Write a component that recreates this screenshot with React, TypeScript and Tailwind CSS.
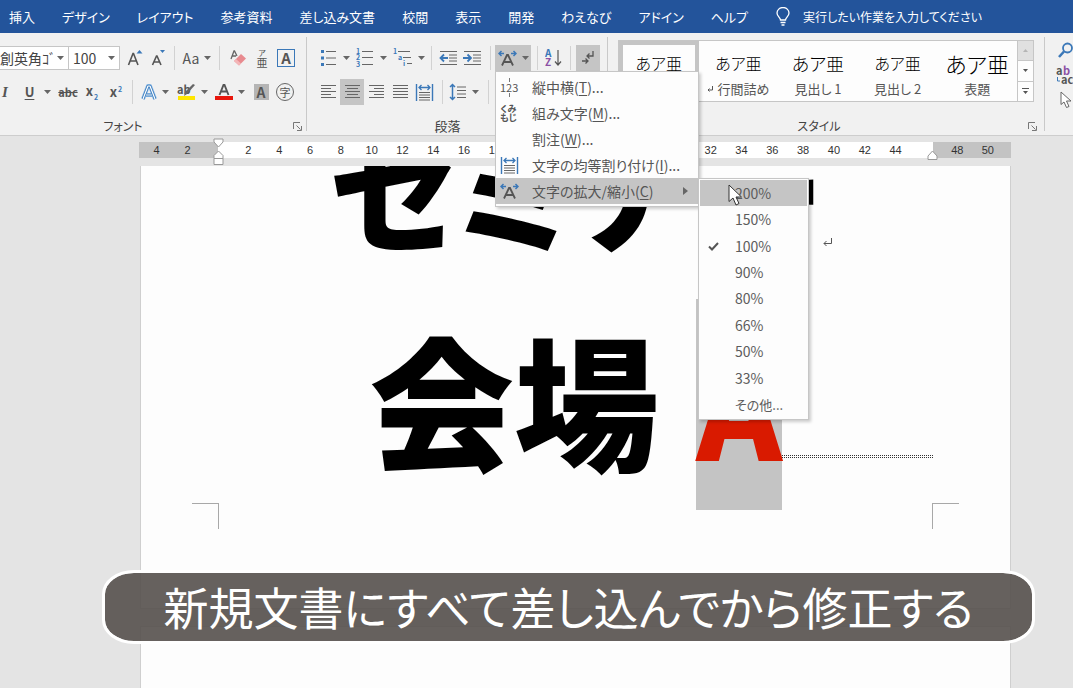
import React from "react";
import clsx from "clsx";

const tabs = [
  "挿入",
  "デザイン",
  "レイアウト",
  "参考資料",
  "差し込み文書",
  "校閲",
  "表示",
  "開発",
  "わえなび",
  "アドイン",
  "ヘルプ",
];

const scales = ["200%", "150%", "100%", "90%", "80%", "66%", "50%", "33%", "その他..."];

const styles = [
  { name: "標準", size: "text-[16px]" },
  { name: "行間詰め", size: "text-[16px]", mark: true },
  { name: "見出し 1", size: "text-[18px]" },
  { name: "見出し 2", size: "text-[16px]" },
  { name: "表題", size: "text-[22px]" },
];

const rulerMiddle = Array.from({ length: 22 }, (_, i) => (i + 1) * 2);

function Caret() {
  return (
    <svg width="7" height="4" viewBox="0 0 7 4" className="shrink-0" fill="#666">
      <path d="M0 0h7L3.5 4z" />
    </svg>
  );
}

function Divider() {
  return <span className="h-6 w-px shrink-0 bg-[#d2d2d2]" />;
}

interface ToolProps {
  label: string;
  className?: string;
  active?: boolean;
  caret?: boolean;
  children: React.ReactNode;
}

function Tool({ label, className, active, caret, children }: ToolProps) {
  return (
    <button
      type="button"
      aria-label={label}
      className={clsx(
        "flex h-[26px] shrink-0 items-center justify-center",
        caret && "gap-[5px]",
        active && "bg-[#c5c5c5]",
        className ?? "w-6"
      )}
    >
      {children}
      {caret && <Caret />}
    </button>
  );
}

function Launcher({ label }: { label: string }) {
  return (
    <button type="button" aria-label={label} className="flex h-4 w-4 items-center justify-center">
      <svg width="9" height="9" viewBox="0 0 9 9" fill="none" stroke="#777">
        <path d="M0.5 7V0.5H7M3.5 3.5l4 4M8.5 4v4.5H4" />
      </svg>
    </button>
  );
}

function Lines({ rows }: { rows: [number, number][] }) {
  return (
    <svg width="17" height="16" viewBox="0 0 17 16" stroke="#666" fill="none">
      {rows.map(([from, to], i) => (
        <path key={i} d={`M${from} ${i * 3 + 1.5}H${to}`} />
      ))}
    </svg>
  );
}

function DistributeIcon() {
  return (
    <svg width="19" height="19" viewBox="0 0 19 19" fill="none">
      <path d="M1.5 1v17M17.5 1v17" stroke="#3b78b8" strokeWidth="1.4" />
      <path d="M4 4.5h11M6.5 2L4 4.500l2.500 2.500M12.500 2L15 4.500 12.500 7" stroke="#3b78b8" strokeWidth="1.300" />
      <path d="M4 9.500h11M4 12h11M4 14.500h11M4 17h11" stroke="#666" />
    </svg>
  );
}

function ScaleIcon() {
  return (
    <svg width="19" height="18" viewBox="0 0 19 18" fill="none">
      <path d="M4 16.500L9 6h1l5 10.500M6 13h7" stroke="#555" strokeWidth="1.800" />
      <path d="M1 4.500h5M3.500 2L1 4.500 3.500 7M18 4.500h-5M15.500 2L18 4.500 15.500 7" stroke="#3b78b8" strokeWidth="1.500" />
    </svg>
  );
}

function ReturnMark() {
  return (
    <svg width="9" height="9" viewBox="0 0 9 9" fill="none" stroke="#555">
      <path d="M8.500 0v5.500H1M3.500 3L1 5.500 3.500 8" />
    </svg>
  );
}

function FontGroup() {
  return (
    <section className="flex w-[307px] shrink-0 flex-col border-r border-[#c9c9c9]">
      <div className="flex h-6 items-center">
        <div className="flex h-full w-[69px] items-center border-y border-r border-[#c6c6c6] bg-white pr-1">
          <input
            aria-label="フォント名"
            defaultValue="創英角ｺﾞ"
            className="w-full min-w-0 text-[14px] text-[#444] outline-none"
          />
          <Caret />
        </div>
        <div className="flex h-full w-[51px] items-center border-y border-r border-[#c6c6c6] bg-white pr-1 pl-1">
          <input
            aria-label="フォント サイズ"
            defaultValue="100"
            className="w-full min-w-0 text-[14px] text-[#444] outline-none"
          />
          <Caret />
        </div>
        <Tool label="フォントの拡大" className="ml-[3px] w-6">
          <svg width="16" height="18" viewBox="0 0 16 18" fill="none">
            <path d="M1.500 16L6 4.500h.500L11 16M3 12h6.500" stroke="#555" strokeWidth="1.600" />
            <path d="M9.500 4.500l3-3.500 3 3.500z" fill="#3b78b8" />
          </svg>
        </Tool>
        <Tool label="フォントの縮小">
          <svg width="16" height="18" viewBox="0 0 16 18" fill="none">
            <path d="M1.500 16L5.500 7H6l4 9M3 13h5.500" stroke="#555" strokeWidth="1.600" />
            <path d="M9 1l2.500 3L14 1z" fill="#3b78b8" />
          </svg>
        </Tool>
        <span className="w-[3px]" />
        <Divider />
        <Tool label="文字種の変換" className="w-11 text-[14px] text-[#555]" caret>
          Aa
        </Tool>
        <Divider />
        <Tool label="書式のクリア" className="ml-1 w-7">
          <svg width="17" height="18" viewBox="0 0 17 18" fill="none">
            <path d="M1 10L4 2h.500L7 7M2 7h4" stroke="#666" strokeWidth="1.300" />
            <path d="M4 12l7-7 5 4.500-7 7z" fill="#e88a8f" />
            <path d="M4 12l2-2 5 4.500-2 2z" fill="#f3b6b8" />
          </svg>
        </Tool>
        <Tool label="ルビ" className="w-5 flex-col text-[#555]">
          <span className="text-[8px] leading-[8px]">ア</span>
          <span className="text-[11px] leading-[11px]">亜</span>
        </Tool>
        <Tool label="囲み線" className="ml-[2px] w-6">
          <span className="flex h-[18px] w-[18px] items-center justify-center border border-[#3b78b8] text-[15px] font-bold text-[#555]">
            A
          </span>
        </Tool>
      </div>

      <div className="mt-[10px] flex h-6 items-center text-[#555]">
        <Tool label="斜体" className="w-[10px]">
          <span className="font-['Liberation_Serif',serif] text-[15px] font-bold italic">I</span>
        </Tool>
        <Tool label="下線" className="ml-[10px] w-9 gap-[10px]">
          <span className="text-[13px] font-bold underline underline-offset-2">U</span>
          <Caret />
        </Tool>
        <Tool label="取り消し線">
          <span className="text-[11px] font-bold line-through">abc</span>
        </Tool>
        <Tool label="下付き">
          <span className="text-[13px] font-bold">
            x<span className="ml-px align-sub text-[7px] text-[#3b78b8]">2</span>
          </span>
        </Tool>
        <Tool label="上付き">
          <span className="text-[13px] font-bold">
            x<span className="ml-px align-super text-[7px] text-[#3b78b8]">2</span>
          </span>
        </Tool>
        <span className="w-1" />
        <Divider />
        <Tool label="文字の効果" className="ml-1 w-9" caret>
          <svg width="16" height="17" viewBox="0 0 16 17" fill="none" strokeLinejoin="round">
            <path d="M2 15L7 2h2l5 13M5 11h6" stroke="#8fbbe6" strokeWidth="4" />
            <path d="M2 15L7 2h2l5 13M5 11h6" stroke="#2f74b8" strokeWidth="2.600" />
            <path d="M2 15L7 2h2l5 13M5 11h6" stroke="#fff" strokeWidth="1.200" />
          </svg>
        </Tool>
        <Tool label="蛍光ペンの色" className="w-[38px]" caret>
          <svg width="19" height="20" viewBox="0 0 19 20" fill="none">
            <text x="0" y="12" fontSize="11" fontWeight="700" fill="#555">ab</text>
            <path d="M18 3l-8 9-3 2 1-4 8-8z" fill="#666" />
            <path d="M1 14h17v4H1z" fill="#ffe600" />
          </svg>
        </Tool>
        <Tool label="フォントの色" className="w-[38px]" caret>
          <svg width="18" height="18" viewBox="0 0 18 18" fill="none">
            <path d="M4.500 12L8.500 2h1l4 10M6 8.500h6" stroke="#555" strokeWidth="1.900" />
            <path d="M0 13h18v4H0z" fill="#e8160c" />
          </svg>
        </Tool>
        <Tool label="文字の網かけ">
          <span className="flex h-4 w-[15px] items-center justify-center bg-[#b5b5b5] text-[14px] font-bold">A</span>
        </Tool>
        <Tool label="囲い文字">
          <span className="flex h-[18px] w-[18px] items-center justify-center rounded-full border border-[#666] text-[11px] leading-none">
            字
          </span>
        </Tool>
      </div>

      <div className="mt-[14px] flex h-4 items-center">
        <h2 className="flex-1 pl-[11px] text-center text-[12px] text-[#444]">
          <span className="mr-[54px]">フォント</span>
        </h2>
        <Launcher label="フォントの設定" />
        <span className="w-px" />
      </div>
    </section>
  );
}

const layoutMenu = [
  { text: "縦中横", key: "T", more: true },
  { text: "組み文字", key: "M", more: true },
  { text: "割注", key: "W", more: true },
  { text: "文字の均等割り付け", key: "I", more: true },
  { text: "文字の拡大/縮小", key: "C", more: false },
];

function MenuIcon({ id }: { id: string }) {
  if (id === "T") {
    return (
      <span className="flex flex-col items-center text-[11px] leading-[11px]">
        <span className="h-1 w-px bg-[#777]" />
        123
        <span className="h-1 w-px bg-[#777]" />
      </span>
    );
  }
  if (id === "M") {
    return (
      <span className="text-center text-[9px] leading-[9px] font-bold">
        くみ
        <br />
        もじ
      </span>
    );
  }
  if (id === "I") return <DistributeIcon />;
  if (id === "C") return <ScaleIcon />;
  return null;
}

function ScaleMenu() {
  return (
    <ul className="absolute top-0 left-full flex h-[242px] w-[111px] flex-col border border-[#c6c6c6] bg-[#fdfdfd] p-px shadow-[2px_2px_3px_rgba(0,0,0,0.2)]">
      {scales.map((scale, i) => (
        <li key={scale} className={clsx("relative flex flex-1", i === 0 && "bg-[#c5c5c5]")}>
          <button
            type="button"
            className={clsx(
              "flex w-full items-center text-[#5c5c5c]",
              scale.endsWith("%") ? "text-[14px]" : "text-[13px]"
            )}
          >
            <span className="flex w-[35px] pl-2">
              {scale === "100%" && (
                <svg width="11" height="9" viewBox="0 0 11 9" fill="none" stroke="#555" strokeWidth="2">
                  <path d="M1 4.500L4 7.500 10 1" />
                </svg>
              )}
            </span>
            {scale}
          </button>
          {i === 0 && (
            <svg width="15" height="22" viewBox="0 0 15 22" className="absolute top-1 left-7" fill="#fff" stroke="#333">
              <path d="M1 1v16.500l4-3.500 3 7 3-1.500-3-6.500h5.500z" />
            </svg>
          )}
        </li>
      ))}
    </ul>
  );
}

function LayoutMenu() {
  return (
    <ul className="absolute top-full left-0 z-10 w-[204px] border border-[#c6c6c6] bg-[#fdfdfd] py-[2px] shadow-[2px_2px_3px_rgba(0,0,0,0.2)]">
      {layoutMenu.map(({ text, key, more }) => (
        <li key={key} className={clsx("relative h-[26px]", !more && "bg-[#c5c5c5]")}>
          <button type="button" className="flex h-full w-full items-center pr-[10px] text-[14px] text-[#555]">
            <span className="flex w-9 items-center pl-1">
              <MenuIcon id={key} />
            </span>
            <span className="whitespace-nowrap">
              {text}(<u className="underline-offset-2">{key}</u>){more && "..."}
            </span>
            {!more && (
              <svg width="5" height="8" viewBox="0 0 5 8" className="ml-auto" fill="#666">
                <path d="M0 0l5 4-5 4z" />
              </svg>
            )}
          </button>
          {!more && <ScaleMenu />}
        </li>
      ))}
    </ul>
  );
}

function ParagraphGroup() {
  return (
    <section className="flex w-[301px] shrink-0 flex-col border-r border-[#c9c9c9] pl-[9px]">
      <div className="flex h-6 items-center">
        <Tool label="箇条書き" className="w-[37px]" caret>
          <svg width="18" height="18" viewBox="0 0 18 18">
            <path d="M1 1h3v3H1zM1 7.500h3v3H1zM1 14h3v3H1z" fill="#3b78b8" />
            <path d="M6 2.500h10M6 9h10M6 15.500h10" stroke="#666" />
          </svg>
        </Tool>
        <Tool label="段落番号" className="w-[37px]" caret>
          <svg width="19" height="24" viewBox="0 0 19 24" fill="#3b78b8" fontSize="7" fontWeight="700">
            <text x="0" y="8">1</text>
            <text x="0" y="14">2</text>
            <text x="0" y="21">3</text>
            <path d="M6 5.500h11M6 11.500h11M6 18.500h11" stroke="#666" />
          </svg>
        </Tool>
        <Tool label="アウトライン" className="w-[38px]" caret>
          <svg width="20" height="24" viewBox="0 0 20 24" fill="#3b78b8" fontSize="7" fontWeight="700">
            <text x="0" y="8">1</text>
            <text x="5" y="14">a</text>
            <text x="10" y="20">i</text>
            <path d="M5 5.500h12M10 11.500h8M14 17.500h5" stroke="#666" />
          </svg>
        </Tool>
        <span className="w-[3px]" />
        <Divider />
        <Tool label="インデントを減らす" className="ml-1 w-6">
          <svg width="19" height="16" viewBox="0 0 19 16" fill="none">
            <path d="M1 1.500h17M10 5h8M10 8h8M10 11h8M1 14.500h17" stroke="#666" />
            <path d="M9 8H2M5 4.500L1.500 8 5 11.500" stroke="#3b78b8" strokeWidth="1.800" />
          </svg>
        </Tool>
        <Tool label="インデントを増やす">
          <svg width="19" height="16" viewBox="0 0 19 16" fill="none">
            <path d="M1 1.500h17M10 5h8M10 8h8M10 11h8M1 14.500h17" stroke="#666" />
            <path d="M0 8h7M4.500 4.500L8 8l-3.500 3.500" stroke="#3b78b8" strokeWidth="1.800" />
          </svg>
        </Tool>
        <span className="w-[6px]" />
        <Divider />
        <div className="relative ml-1">
          <Tool label="拡張書式" className="w-9" active caret>
            <ScaleIcon />
          </Tool>
          <LayoutMenu />
        </div>
        <span className="w-[6px]" />
        <Divider />
        <Tool label="並べ替え" className="ml-1 w-6">
          <svg width="18" height="24" viewBox="0 0 18 24" fill="none">
            <text x="0" y="11" fontSize="10" fontWeight="700" fill="#3b78b8">A</text>
            <text x="0" y="20" fontSize="10" fontWeight="700" fill="#8b50a5">Z</text>
            <path d="M13 4v15M10 15.500l3 3.500 3-3.500" stroke="#555" strokeWidth="1.200" />
          </svg>
        </Tool>
        <span className="w-1" />
        <Divider />
        <Tool label="編集記号の表示" className="ml-[5px] w-6" active>
          <svg width="14" height="16" viewBox="0 0 14 16" fill="none" stroke="#555" strokeWidth="1.300">
            <path d="M12 1v5H6M8.500 3.500L6 6l2.500 2.500M1 11h6M4.500 8.500L7 11l-2.500 2.500" />
          </svg>
        </Tool>
      </div>

      <div className="mt-[10px] flex h-6 items-center">
        <Tool label="左揃え">
          <Lines rows={[[1, 16], [1, 11], [1, 16], [1, 11], [1, 16]]} />
        </Tool>
        <Tool label="中央揃え" active>
          <Lines rows={[[1, 16], [3, 14], [1, 16], [3, 14], [1, 16]]} />
        </Tool>
        <Tool label="右揃え">
          <Lines rows={[[1, 16], [6, 16], [1, 16], [6, 16], [1, 16]]} />
        </Tool>
        <Tool label="両端揃え">
          <Lines rows={[[1, 16], [1, 16], [1, 16], [1, 16], [1, 16]]} />
        </Tool>
        <Tool label="均等割り付け">
          <DistributeIcon />
        </Tool>
        <span className="w-[6px]" />
        <Divider />
        <Tool label="行間" className="ml-[3px] w-9" caret>
          <svg width="18" height="18" viewBox="0 0 18 18" fill="none">
            <path d="M3.500 1.500v15M1 4l2.500-2.500L6 4M1 14l2.500 2.500L6 14" stroke="#3b78b8" strokeWidth="1.500" />
            <path d="M8 4h9M8 7.500h9M8 11h9M8 14.500h9" stroke="#666" />
          </svg>
        </Tool>
        <span className="w-[6px]" />
        <Divider />
      </div>

      <h2 className="mt-[14px] pr-[28px] text-center text-[13px] leading-4 text-[#444]">段落</h2>
    </section>
  );
}

function StyleGroup() {
  return (
    <section className="flex min-w-0 flex-1 flex-col border-r border-[#c9c9c9] pr-1 pl-[10px]">
      <div className="-mt-[6px] mr-[6px] flex h-[66px] border border-[#c6c6c6] bg-[#fdfdfd]">
        <div className="grid min-w-0 flex-1 grid-cols-5">
          {styles.map((style, i) => (
            <button
              key={style.name}
              type="button"
              className={clsx(
                "flex flex-col items-center overflow-hidden whitespace-nowrap text-black",
                i === 0 ? "border-4 border-[#c5c5c5] pt-[6px]" : "pt-[10px]"
              )}
            >
              <span className={clsx("flex h-6 items-center font-light", style.size)}>あア亜</span>
              <span className="mt-[6px] flex items-center gap-1 text-[13px] leading-4 text-[#555]">
                {style.mark && (
                  <svg width="6" height="6" viewBox="0 0 6 6" fill="none" stroke="#555">
                    <path d="M5.500 0v4H1M2.500 2.500L1 4l1.500 1.500" />
                  </svg>
                )}
                {style.name}
              </span>
            </button>
          ))}
        </div>
        <div className="flex w-4 shrink-0 flex-col border-l border-[#c6c6c6]">
          <button type="button" aria-label="上へ" className="flex flex-1 items-center justify-center bg-[#e0e0e0]">
            <svg width="5" height="3" viewBox="0 0 5 3" fill="#b5b5b5"><path d="M0 3h5L2.500 0z" /></svg>
          </button>
          <button type="button" aria-label="下へ" className="flex flex-1 items-center justify-center border-y border-[#c6c6c6]">
            <svg width="5" height="3" viewBox="0 0 5 3" fill="#555"><path d="M0 0h5L2.500 3z" /></svg>
          </button>
          <button type="button" aria-label="その他" className="flex flex-1 items-center justify-center">
            <svg width="7" height="7" viewBox="0 0 7 7" fill="#555"><path d="M0 0h7v1H0zM1 3h5L3.500 6z" /></svg>
          </button>
        </div>
      </div>
      <div className="mt-4 flex h-4 items-center">
        <h2 className="flex-1 pr-1 text-center text-[12px] text-[#444]">スタイル</h2>
        <Launcher label="スタイルの設定" />
      </div>
    </section>
  );
}

function EditGroup() {
  return (
    <section className="-mt-1 flex w-7 shrink-0 flex-col items-end gap-[5px] overflow-hidden">
      <button type="button" aria-label="検索">
        <svg width="16" height="18" viewBox="0 0 16 18" fill="none" stroke="#3b78b8">
          <circle cx="10.500" cy="6" r="4.500" strokeWidth="1.800" />
          <path d="M7 9.500L2 15" strokeWidth="2.600" />
        </svg>
      </button>
      <button type="button" aria-label="置換">
        <svg width="17" height="21" viewBox="0 0 17 21" fontSize="11" fontWeight="700">
          <text x="0" y="10" fill="#555">a</text>
          <text x="7" y="10" fill="#8b50a5">b</text>
          <text x="5" y="19" fill="#555">ac</text>
          <path d="M1.500 12v4H4" stroke="#3b78b8" fill="none" />
        </svg>
      </button>
      <button type="button" aria-label="選択">
        <svg width="13" height="18" viewBox="0 0 13 18" fill="#fff" stroke="#666">
          <path d="M1 1v12.500l3-2.500 2.500 5.500 2.500-1-2.500-5.500H11z" />
        </svg>
      </button>
    </section>
  );
}

function Ruler() {
  return (
    <div className="flex h-[30px] bg-[#e4e4e4] pt-[6px] pr-[62px] pl-[139px] font-['Liberation_Sans',sans-serif] text-[11px] text-[#333]">
      <div className="grid h-4 w-[79px] shrink-0 grid-cols-2 items-center bg-[#c3c3c3] pr-[15px] pl-[2px] text-center">
        <span>4</span>
        <span>2</span>
      </div>
      <div className="relative grid h-4 flex-1 grid-cols-22 items-center bg-white pr-[22px] pl-[15px] text-center">
        {rulerMiddle.map((n) => (
          <span key={n}>{n}</span>
        ))}
        <svg width="11" height="29" viewBox="0 0 11 29" className="absolute -top-1 -left-[5px]" fill="#fff" stroke="#999">
          <path d="M1 1h9v3L5.500 9 1 4zM5.500 13L10 17.500v3H1v-3zM1 20.500h9v6H1z" />
        </svg>
        <svg width="11" height="11" viewBox="0 0 11 11" className="absolute top-2 -right-[5px]" fill="#fff" stroke="#999">
          <path d="M5.500 1L10 6v3.500H1V6z" />
        </svg>
      </div>
      <div className="grid h-4 w-[78px] shrink-0 grid-cols-2 items-center bg-[#c3c3c3] pr-2 pl-[9px] text-center">
        <span>48</span>
        <span>50</span>
      </div>
    </div>
  );
}

function Document() {
  return (
    <main className="min-h-0 flex-1 overflow-hidden bg-[#e4e4e4] pr-[62px] pl-[140px]">
      <article className="flex h-[443px] flex-col border-x border-b border-[#cfcfcf] bg-[#fdfdfd] px-[51px]">
        <div className="-mt-[87px] px-[26px] leading-[213px] font-black text-black">
          <p className="grid grid-cols-[1fr_auto_1fr] items-center text-[132px] whitespace-nowrap">
            <span className="col-start-2">セミナー</span>
            <span className="mt-[114px]">
              <ReturnMark />
            </span>
          </p>
          <p className="grid grid-cols-[1fr_auto_1fr] items-center text-[145px] whitespace-nowrap">
            <span className="col-start-2">
              会場{" "}
              <span className="ml-1 inline-block bg-[#c4c4c4] text-[130px] leading-[211px] text-[#d91a00]">A</span>
            </span>
            <span className="mt-[111px] h-[3px] border-y border-dotted border-[#333]" />
          </p>
        </div>
        <div className="-mt-[7px] flex justify-between">
          <span className="h-[26px] w-[27px] border-t border-r border-[#a8a8a8]" />
          <span className="h-[26px] w-[27px] border-t border-l border-[#a8a8a8]" />
        </div>
      </article>
      <article className="mt-[17px] h-[500px] border-x border-t border-[#cfcfcf] bg-[#fdfdfd]" />
    </main>
  );
}

export default function App() {
  return (
    <div
      lang="ja"
      className="relative flex h-screen flex-col overflow-hidden bg-[#e4e4e4] font-['Noto_Sans_CJK_JP',sans-serif] [font-feature-settings:'palt']"
    >
      <header className="flex h-[33px] shrink-0 items-center bg-[#23549b] pl-[9px] text-[13px] text-white">
        <nav className="flex gap-[27px] whitespace-nowrap">
          {tabs.map((tab) => (
            <a key={tab} href="#">
              {tab}
            </a>
          ))}
        </nav>
        <label className="ml-7 flex flex-1 items-center gap-[13px]">
          <svg width="14" height="19" viewBox="0 0 14 19" fill="none" stroke="#fff" strokeWidth="1.300">
            <path d="M4.500 13c0-2.500-3.500-3.500-3.500-7a6 5.500 0 0112 0c0 3.500-3.500 4.500-3.500 7zM4.500 15.500h5M5.500 18h3" />
          </svg>
          <input
            aria-label="操作アシスト"
            placeholder="実行したい作業を入力してください"
            className="min-w-0 flex-1 text-[12px] outline-none placeholder:text-white placeholder:opacity-100"
          />
        </label>
      </header>

      <div className="relative z-10 flex h-[103px] shrink-0 border-b border-[#cdcdcd] bg-[#f1f1f1] pt-1">
        <div className="flex w-full pb-1 [&>section]:pt-[9px]">
          <FontGroup />
          <ParagraphGroup />
          <StyleGroup />
          <EditGroup />
        </div>
      </div>

      <Ruler />
      <Document />

      <p className="absolute right-[38px] bottom-11 left-[102px] rounded-[32px/24px] border-[3px] border-white bg-[#55504c]/90 bg-clip-padding text-center text-[45px] leading-[68px] whitespace-nowrap text-white">
        新規文書にすべて差し込んでから修正する
      </p>
    </div>
  );
}
